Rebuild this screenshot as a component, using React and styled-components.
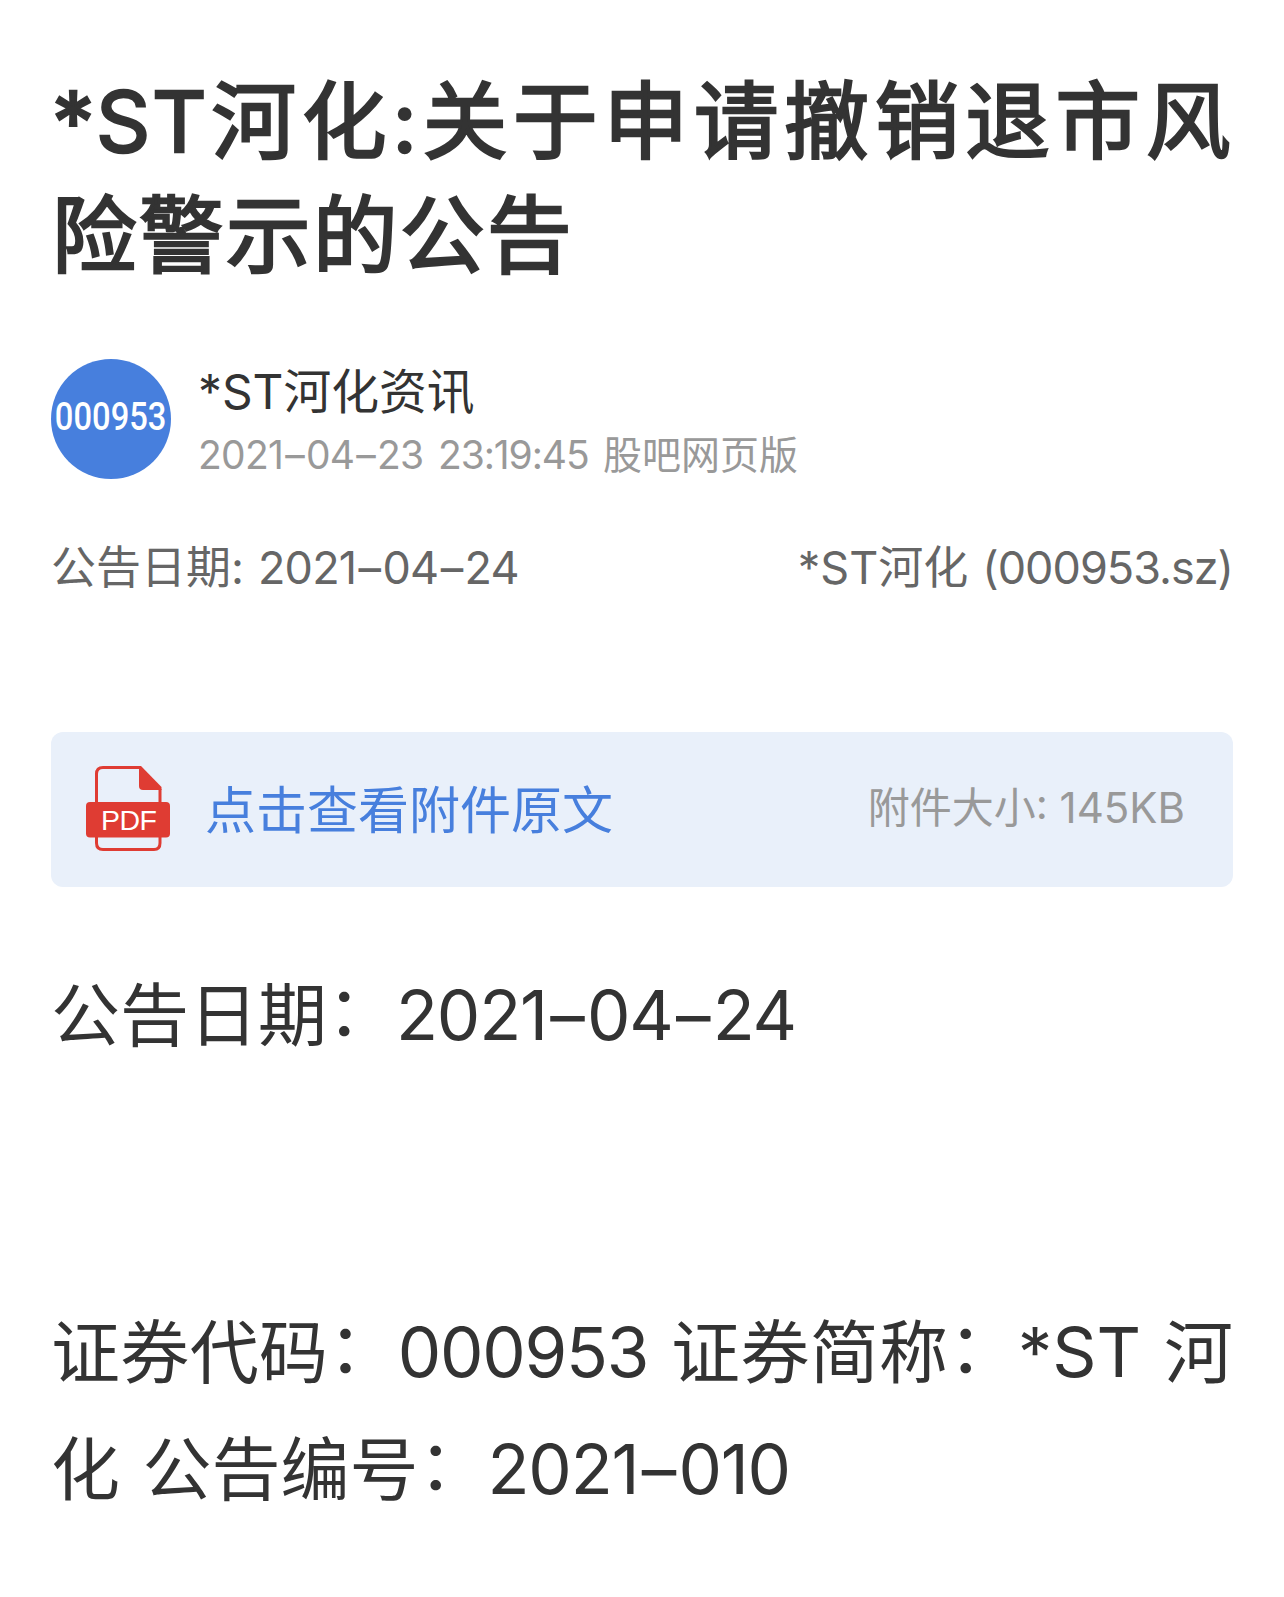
import React from "react";
import styled, { createGlobalStyle } from "styled-components";

const GlobalStyle = createGlobalStyle`
  * {
    box-sizing: border-box;
  }

  body {
    margin: 0;
    background: #fff;
    color: #333;
    font-family: Inter, "Noto Sans CJK SC", sans-serif;
  }
`;

const Page = styled.main`
  width: 1284px;
  min-height: 1597px;
  padding: 64px 51px 0;
  overflow: hidden;
`;

const Title = styled.h1`
  margin: 0;
  padding-left: 1px;
  font-size: 84.5px;
  font-weight: 400;
  letter-spacing: 2.5px;
  line-height: 114px;
  text-align: justify;
  -webkit-text-stroke: 2.6px #333;
`;

const Latin = styled.span`
  letter-spacing: ${(props) => props.$spacing ?? -0.018}em;
`;

const Dash = styled.span`
  margin: 0 0.05em;
`;

const Colon = styled.span`
  line-height: 0;
  vertical-align: 5px;
`;

const Author = styled.div`
  display: flex;
  align-items: flex-start;
  gap: 28px;
  margin-top: 67px;
`;

const Avatar = styled.div`
  display: flex;
  align-items: center;
  justify-content: center;
  width: 120px;
  height: 120px;
  padding-bottom: 5px;
  border-radius: 50%;
  background: #477fdd;
`;

const AvatarCode = styled.span`
  color: #fff;
  font-family: Roboto, sans-serif;
  font-size: 38.5px;
  font-weight: 500;
  transform: scaleX(0.85);
`;

const AuthorText = styled.div`
  display: flex;
  flex-direction: column;
  margin: 0 0 0 -1px;
`;

const Name = styled.div`
  font-size: 47.8px;
  line-height: 66px;
`;

const Time = styled.div`
  color: #999;
  font-size: 39px;
  line-height: 60px;
  word-spacing: 0.09em;
`;

const Meta = styled.div`
  display: flex;
  justify-content: space-between;
  margin-top: 50px;
  color: #666;
  font-size: 45px;
  line-height: 66px;
  word-spacing: 0.03em;
`;

const Attachment = styled.a`
  display: flex;
  align-items: center;
  height: 155px;
  margin-top: 131px;
  padding: 0 48px 0 35px;
  border-radius: 12px;
  background: #e9f0fa;
`;

const AttachmentName = styled.span`
  flex: 1;
  margin-left: 35px;
  padding-bottom: 5px;
  color: #477fdd;
  font-size: 51px;
`;

const AttachmentSize = styled.span`
  padding-bottom: 10px;
  color: #999;
  font-size: 42px;
`;

const Content = styled.article`
  margin-top: 71px;
  font-size: 69px;
  line-height: 117px;
  text-align: justify;
  word-spacing: 0.045em;

  ${Latin} {
    line-height: 0;
    vertical-align: 1px;
  }
`;

const Paragraph = styled.p`
  margin: 0 0 220px;

  &:last-child {
    margin-bottom: 0;
  }
`;

const PdfSvg = styled.svg`
  margin-bottom: 2px;
`;

function PdfIcon() {
  return (
    <PdfSvg width="84" height="86" viewBox="0 0 84 86" fill="none">
      <path
        d="M54 1.5H17Q10.500 1.5 10.500 8V77Q10.500 83.500 17 83.500H68Q74 83.500 74 77V23"
        stroke="#df3c33"
        strokeWidth="3"
      />
      <path d="M53 0H55L75.500 21V24H57Q53 24 53 20Z" fill="#df3c33" />
      <rect y="36" width="84" height="35.500" rx="4" fill="#df3c33" />
      <text
        x="15"
        y="64"
        fill="#fff"
        fontFamily="Liberation Sans, sans-serif"
        fontSize="28.500"
        textLength="56"
      >
        PDF
      </text>
    </PdfSvg>
  );
}

function DateText({ value }) {
  const parts = value.split("–");

  return (
    <Latin>
      {parts.map((part, index) => (
        <React.Fragment key={index}>
          {index > 0 && <Dash>–</Dash>}
          {part}
        </React.Fragment>
      ))}
    </Latin>
  );
}

function App() {
  return (
    <Page>
      <GlobalStyle />
      <Title>
        <Latin $spacing={0.02}>*ST</Latin>河化:关于申请撤销退市风险警示的公告
      </Title>
      <Author>
        <Avatar>
          <AvatarCode>000953</AvatarCode>
        </Avatar>
        <AuthorText>
          <Name>*ST河化资讯</Name>
          <Time>
            <DateText value="2021–04–23" />{" "}
            <Latin $spacing={-0.028}>23:19:45</Latin> 股吧网页版
          </Time>
        </AuthorText>
      </Author>
      <Meta>
        <span>
          公告日期: <DateText value="2021–04–24" />
        </span>
        <span>
          *ST河化 <Latin $spacing={-0.022}>(000953.sz)</Latin>
        </span>
      </Meta>
      <Attachment>
        <PdfIcon />
        <AttachmentName>点击查看附件原文</AttachmentName>
        <AttachmentSize>
          附件大小: <Latin $spacing={0}>145KB</Latin>
        </AttachmentSize>
      </Attachment>
      <Content>
        <Paragraph>
          公告日期<Colon>：</Colon>
          <DateText value="2021–04–24" />
        </Paragraph>
        <Paragraph>
          证券代码<Colon>：</Colon>
          <Latin>000953</Latin> 证券简称<Colon>：</Colon>
          <Latin $spacing={0}>*ST</Latin> 河化 公告编号
          <Colon>：</Colon>
          <DateText value="2021–010" />
        </Paragraph>
      </Content>
    </Page>
  );
}

export default App;
